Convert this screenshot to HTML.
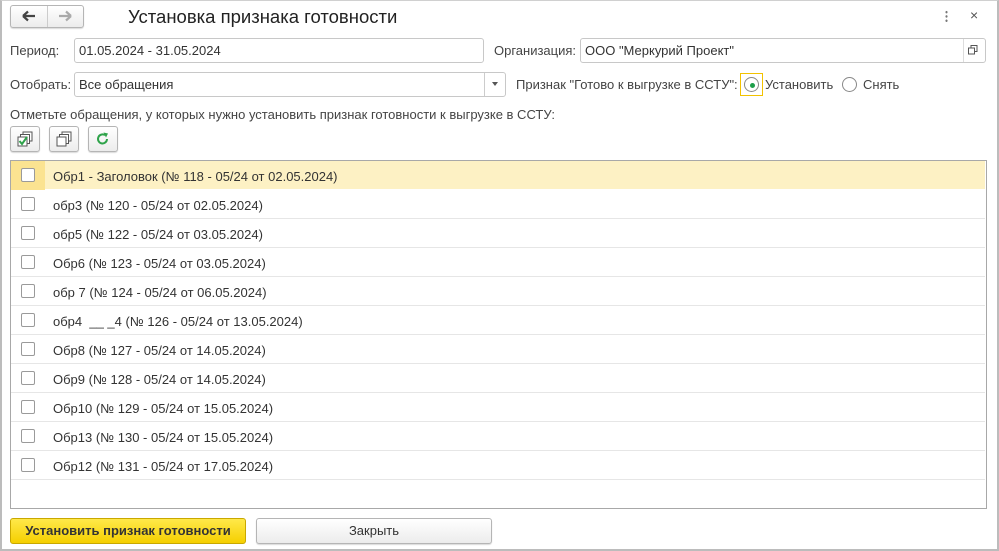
<!DOCTYPE html>
<html><head><meta charset="utf-8"><style>
*{box-sizing:border-box;margin:0;padding:0}
body{width:999px;height:551px;background:#fff;font-family:"Liberation Sans",Arial,sans-serif;font-size:13px;color:#333;position:relative;overflow:hidden}
.frame{position:absolute;left:0;top:0;width:999px;height:551px;border:2px solid #bcbcbc;border-top:1px solid #d0d0d0}
.abs{position:absolute}
.inp{position:absolute;border:1px solid #c8c8c8;border-radius:3px;background:#fff;height:25px;padding:4px 4px;color:#333;white-space:nowrap}
.lbl{position:absolute;color:#444;white-space:nowrap}
.btn{position:absolute;border:1px solid #b5b5b5;border-radius:3px;background:linear-gradient(#fff,#ececec);box-shadow:0 1px 1px rgba(0,0,0,.15)}
.row{position:absolute;left:11px;width:974px;height:29px;border-bottom:1px solid #e6e6e6}
.row .cb{position:absolute;left:10px;top:7px;width:14px;height:14px;border:1px solid #9a9a9a;border-radius:2px;background:#fff}
.row .t{position:absolute;left:42px;top:8px;color:#333;white-space:nowrap}
</style></head><body>
<div class="frame"></div>
<div class="btn" style="left:10px;top:5px;width:74px;height:23px"></div>
<div class="abs" style="left:47px;top:6px;width:1px;height:21px;background:#ccc"></div>
<svg class="abs" style="left:21px;top:10px" width="16" height="12"><path d="M2 6H14M2 6L7 1.5M2 6L7 10.5" stroke="#444" stroke-width="2.2" fill="none"/></svg>
<svg class="abs" style="left:57px;top:10px" width="16" height="12"><path d="M14 6H2M14 6L9 1.5M14 6L9 10.5" stroke="#aaa" stroke-width="2.2" fill="none"/></svg>
<div class="abs" style="left:128px;top:6px;font-size:18.5px;color:#222">Установка признака готовности</div>
<div class="abs" style="left:945px;top:10px;width:3px;height:13px;background:radial-gradient(circle,#777 1px,transparent 1.3px) 0 0/3px 4.3px"></div>
<div class="abs" style="left:970px;top:7px;font-size:14px;color:#555">×</div>

<div class="lbl" style="left:10px;top:43px">Период:</div>
<div class="inp" style="left:74px;top:38px;width:410px">01.05.2024 - 31.05.2024</div>
<div class="lbl" style="left:494px;top:43px">Организация:</div>
<div class="inp" style="left:580px;top:38px;width:406px">ООО "Меркурий Проект"</div>
<div class="abs" style="left:963px;top:39px;width:1px;height:23px;background:#ddd"></div>
<svg class="abs" style="left:968px;top:45px" width="10" height="10"><rect x="3" y="0.5" width="6" height="6" fill="none" stroke="#555"/><rect x="0.5" y="3" width="6" height="6" fill="#fff" stroke="#555"/></svg>

<div class="lbl" style="left:10px;top:77px">Отобрать:</div>
<div class="inp" style="left:74px;top:72px;width:432px">Все обращения</div>
<div class="abs" style="left:484px;top:73px;width:1px;height:23px;background:#ccc"></div>
<div class="abs" style="left:492px;top:82px;border:3px solid transparent;border-top:4px solid #555"></div>
<div class="lbl" style="left:516px;top:77px">Признак "Готово к выгрузке в ССТУ":</div>
<div class="abs" style="left:740px;top:73px;width:23px;height:23px;border:1px solid #f2c200"></div>
<div class="abs" style="left:744px;top:77px;width:15px;height:15px;border:1px solid #888;border-radius:50%"></div>
<div class="abs" style="left:750px;top:83px;width:5px;height:5px;background:#1e9e4a;border-radius:50%"></div>
<div class="lbl" style="left:765px;top:77px">Установить</div>
<div class="abs" style="left:842px;top:77px;width:15px;height:15px;border:1px solid #888;border-radius:50%"></div>
<div class="lbl" style="left:863px;top:77px">Снять</div>

<div class="lbl" style="left:10px;top:107px">Отметьте обращения, у которых нужно установить признак готовности к выгрузке в ССТУ:</div>
<div class="btn" style="left:10px;top:126px;width:30px;height:26px"></div>
<svg class="abs" style="left:17px;top:131px" width="17" height="16"><rect x="6" y="1" width="9" height="9" fill="#fff" stroke="#555"/><rect x="3.5" y="3.5" width="9" height="9" fill="#fff" stroke="#555"/><rect x="1" y="6" width="9" height="9" fill="#fff" stroke="#555"/><path d="M2.5 10L5 13L10 6" stroke="#2ea34a" stroke-width="2" fill="none"/></svg>
<div class="btn" style="left:49px;top:126px;width:30px;height:26px"></div>
<svg class="abs" style="left:56px;top:131px" width="17" height="16"><rect x="6" y="1" width="9" height="9" fill="#fff" stroke="#555"/><rect x="3.5" y="3.5" width="9" height="9" fill="#fff" stroke="#555"/><rect x="1" y="6" width="9" height="9" fill="#fff" stroke="#555"/></svg>
<div class="btn" style="left:88px;top:126px;width:30px;height:26px"></div>
<svg class="abs" style="left:96px;top:132px" width="14" height="14"><path d="M11 7A4.5 4.5 0 1 1 9 3.2" stroke="#2ea34a" stroke-width="2" fill="none"/><path d="M7.5 0.5L12 1.5L10 5.5Z" fill="#2ea34a"/></svg>

<div class="abs" style="left:10px;top:160px;width:977px;height:349px;border:1px solid #a8a8a8"></div>
<div class="row" style="top:161px;background:#fdf1c4;border-bottom-color:#fff"><div class="abs" style="left:0;top:0;width:34px;height:29px;background:#fbe391"></div><div class="cb"></div><div class="t">Обр1 - Заголовок (№ 118 - 05/24 от 02.05.2024)</div></div>
<div class="row" style="top:190px"><div class="cb"></div><div class="t">обр3 (№ 120 - 05/24 от 02.05.2024)</div></div>
<div class="row" style="top:219px"><div class="cb"></div><div class="t">обр5 (№ 122 - 05/24 от 03.05.2024)</div></div>
<div class="row" style="top:248px"><div class="cb"></div><div class="t">Обр6 (№ 123 - 05/24 от 03.05.2024)</div></div>
<div class="row" style="top:277px"><div class="cb"></div><div class="t">обр 7 (№ 124 - 05/24 от 06.05.2024)</div></div>
<div class="row" style="top:306px"><div class="cb"></div><div class="t">обр4 &nbsp;__ _4 (№ 126 - 05/24 от 13.05.2024)</div></div>
<div class="row" style="top:335px"><div class="cb"></div><div class="t">Обр8 (№ 127 - 05/24 от 14.05.2024)</div></div>
<div class="row" style="top:364px"><div class="cb"></div><div class="t">Обр9 (№ 128 - 05/24 от 14.05.2024)</div></div>
<div class="row" style="top:393px"><div class="cb"></div><div class="t">Обр10 (№ 129 - 05/24 от 15.05.2024)</div></div>
<div class="row" style="top:422px"><div class="cb"></div><div class="t">Обр13 (№ 130 - 05/24 от 15.05.2024)</div></div>
<div class="row" style="top:451px"><div class="cb"></div><div class="t">Обр12 (№ 131 - 05/24 от 17.05.2024)</div></div>

<div class="abs" style="left:10px;top:518px;width:236px;height:26px;border:1px solid #c9a800;border-radius:3px;background:linear-gradient(#ffe94a,#f5cf00);text-align:center;line-height:24px;font-weight:bold;color:#333">Установить признак готовности</div>
<div class="btn" style="left:256px;top:518px;width:236px;height:26px;text-align:center;line-height:24px;color:#333">Закрыть</div>
</body></html>
